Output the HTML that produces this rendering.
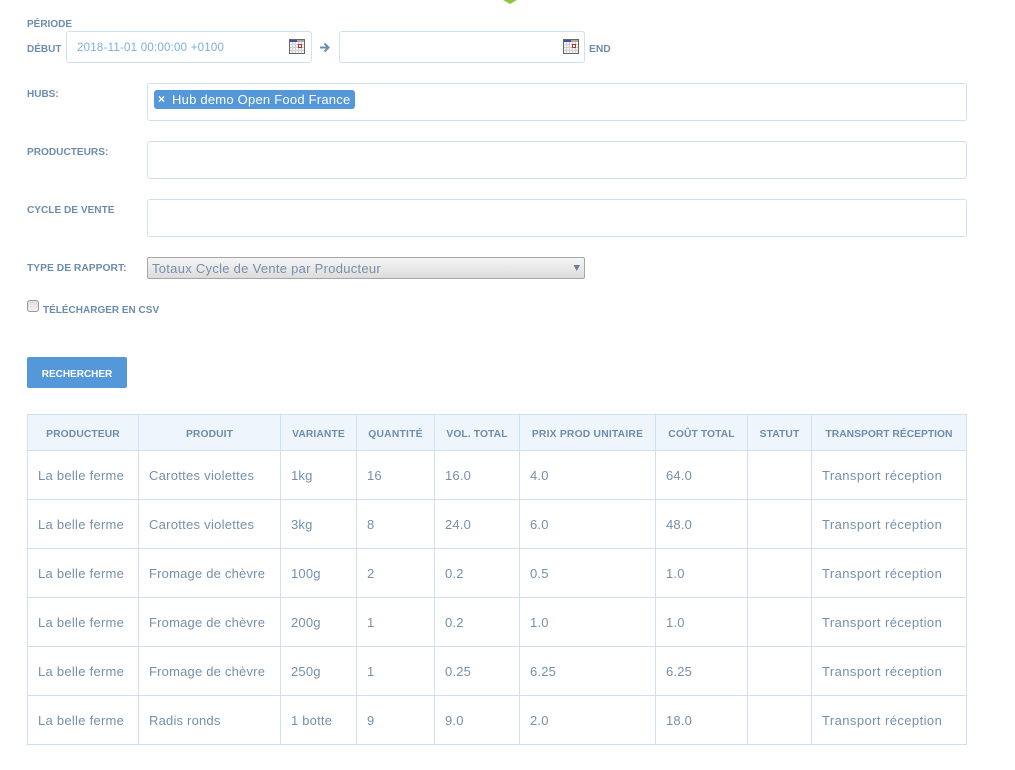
<!DOCTYPE html>
<html><head><meta charset="utf-8">
<style>
html,body{margin:0;padding:0;background:#fff;width:1015px;height:770px;overflow:hidden}
body{position:relative;font-family:"Liberation Sans",sans-serif;color:#7590ab}
.a{position:absolute;white-space:nowrap}
.l{font-size:10.3px;font-weight:bold;color:#6e8cab;line-height:14px}
.box{position:absolute;box-sizing:border-box;background:#fff;border:1px solid #cfe0f3;border-radius:3px}
table{position:absolute;left:27px;top:414px;width:939px;border-collapse:collapse;table-layout:fixed}
th,td{border:1px solid #cfe0f3;box-sizing:border-box;white-space:nowrap;overflow:hidden}
th{height:36px;background:#eff5fc;font-size:10.3px;font-weight:bold;color:#6e8cab;text-align:center;padding:3px 0 0;letter-spacing:.1px}
th.n{letter-spacing:0}
th.p{letter-spacing:.22px}
td{height:49px;font-size:13px;padding:0 0 0 10px;color:#7590ab;letter-spacing:.2px}
td.w{letter-spacing:.27px}
td.t{letter-spacing:.42px}
</style></head><body>
<svg class="a" style="left:502px;top:0" width="16" height="4"><path d="M1 0H15L8 4Z" fill="#8cc63f"/></svg>

<div class="a l" style="left:27px;top:18px;font-size:10px">PÉRIODE</div>
<div class="a l" style="left:27px;top:43px;font-size:10px">DÉBUT</div>
<div class="box" style="left:66px;top:31px;width:246px;height:32px"></div>
<div class="a" style="left:77px;top:41px;font-size:11.5px;line-height:15px;color:#7aaee2;letter-spacing:.23px">2018-11-01 00:00:00 +0100</div>
<svg class="a" style="left:289px;top:39px" width="16" height="15"><rect x=".5" y=".5" width="15" height="14" fill="#f4f4f4" stroke="#666"/><rect x="1" y="1" width="14" height="2" fill="#aaa"/><rect x="1" y="1" width="7" height="2" fill="#4a4aa8"/><path d="M1 5.500H15M1 8.500H15M1 11.500H15M3.500 3V14M6.500 3V14M9.500 3V14M12.500 3V14" stroke="#d0d0d0" stroke-width="1"/><rect x="9.500" y="5.500" width="3" height="3" fill="#fff" stroke="#a33"/></svg>
<svg class="a" style="left:319px;top:42px" width="12" height="11"><path d="M1 5.500H9M5.500 1.500L9.500 5.500L5.500 9.500" fill="none" stroke="#6d8fae" stroke-width="2"/></svg>
<div class="box" style="left:339px;top:31px;width:246px;height:32px"></div>
<svg class="a" style="left:563px;top:39px" width="16" height="15"><rect x=".5" y=".5" width="15" height="14" fill="#f4f4f4" stroke="#666"/><rect x="1" y="1" width="14" height="2" fill="#aaa"/><rect x="1" y="1" width="7" height="2" fill="#4a4aa8"/><path d="M1 5.500H15M1 8.500H15M1 11.500H15M3.500 3V14M6.500 3V14M9.500 3V14M12.500 3V14" stroke="#d0d0d0" stroke-width="1"/><rect x="9.500" y="5.500" width="3" height="3" fill="#fff" stroke="#a33"/></svg>
<div class="a l" style="left:589px;top:43px">END</div>

<div class="a l" style="left:27px;top:88px;font-size:10px">HUBS:</div>
<div class="box" style="left:147px;top:83px;width:820px;height:38px"></div>
<div class="a" style="left:154px;top:90px;width:201px;height:19px;background:#5498da;border-radius:3px"></div>
<div class="a" style="left:158px;top:92px;font-size:12px;line-height:15px;font-weight:bold;color:#fff">×</div>
<div class="a" style="left:172px;top:92px;font-size:13px;line-height:15px;color:#fff;letter-spacing:.23px">Hub demo Open Food France</div>

<div class="a l" style="left:27px;top:146px;font-size:10.1px">PRODUCTEURS:</div>
<div class="box" style="left:147px;top:141px;width:820px;height:38px"></div>
<div class="a l" style="left:27px;top:204px;font-size:10.1px">CYCLE DE VENTE</div>
<div class="box" style="left:147px;top:199px;width:820px;height:38px"></div>

<div class="a l" style="left:27px;top:262px">TYPE DE RAPPORT:</div>
<div class="a" style="left:147px;top:257px;width:438px;height:22px;box-sizing:border-box;border:1px solid #a6a6a6;border-radius:2px;background:linear-gradient(#f6f6f6,#dcdcdc)"></div>
<div class="a" style="left:152px;top:261px;font-size:13px;line-height:15px;color:#7590ab;letter-spacing:.28px">Totaux Cycle de Vente par Producteur</div>
<svg class="a" style="left:573px;top:265px" width="8" height="6"><path d="M.5 0H7L3.750 6Z" fill="#6b8097"/></svg>

<div class="a" style="left:27px;top:300px;width:12px;height:12px;box-sizing:border-box;border:1px solid #999;border-radius:3px;background:linear-gradient(#dedede,#f2f2f2)"></div>
<div class="a l" style="left:43px;top:304px;font-size:10px">TÉLÉCHARGER EN CSV</div>

<div class="a" style="left:27px;top:357px;width:100px;height:31px;background:#5498da;border-radius:2px;color:#fff;font-size:10px;font-weight:bold;line-height:35px;text-align:center">RECHERCHER</div>

<table>
<colgroup><col style="width:111px"><col style="width:142px"><col style="width:76px"><col style="width:78px"><col style="width:85px"><col style="width:136px"><col style="width:92px"><col style="width:64px"><col style="width:155px"></colgroup>
<tr><th>PRODUCTEUR</th><th>PRODUIT</th><th>VARIANTE</th><th class="p">QUANTITÉ</th><th>VOL. TOTAL</th><th class="p">PRIX PROD UNITAIRE</th><th>COÛT TOTAL</th><th>STATUT</th><th class="n">TRANSPORT RÉCEPTION</th></tr>
<tr><td class="w">La belle ferme</td><td class="w">Carottes violettes</td><td>1kg</td><td>16</td><td>16.0</td><td>4.0</td><td>64.0</td><td></td><td class="t">Transport réception</td></tr>
<tr><td class="w">La belle ferme</td><td class="w">Carottes violettes</td><td>3kg</td><td>8</td><td>24.0</td><td>6.0</td><td>48.0</td><td></td><td class="t">Transport réception</td></tr>
<tr><td class="w">La belle ferme</td><td>Fromage de chèvre</td><td>100g</td><td>2</td><td>0.2</td><td>0.5</td><td>1.0</td><td></td><td class="t">Transport réception</td></tr>
<tr><td class="w">La belle ferme</td><td>Fromage de chèvre</td><td>200g</td><td>1</td><td>0.2</td><td>1.0</td><td>1.0</td><td></td><td class="t">Transport réception</td></tr>
<tr><td class="w">La belle ferme</td><td>Fromage de chèvre</td><td>250g</td><td>1</td><td>0.25</td><td>6.25</td><td>6.25</td><td></td><td class="t">Transport réception</td></tr>
<tr><td class="w">La belle ferme</td><td>Radis ronds</td><td>1 botte</td><td>9</td><td>9.0</td><td>2.0</td><td>18.0</td><td></td><td class="t">Transport réception</td></tr>
</table>
</body></html>
